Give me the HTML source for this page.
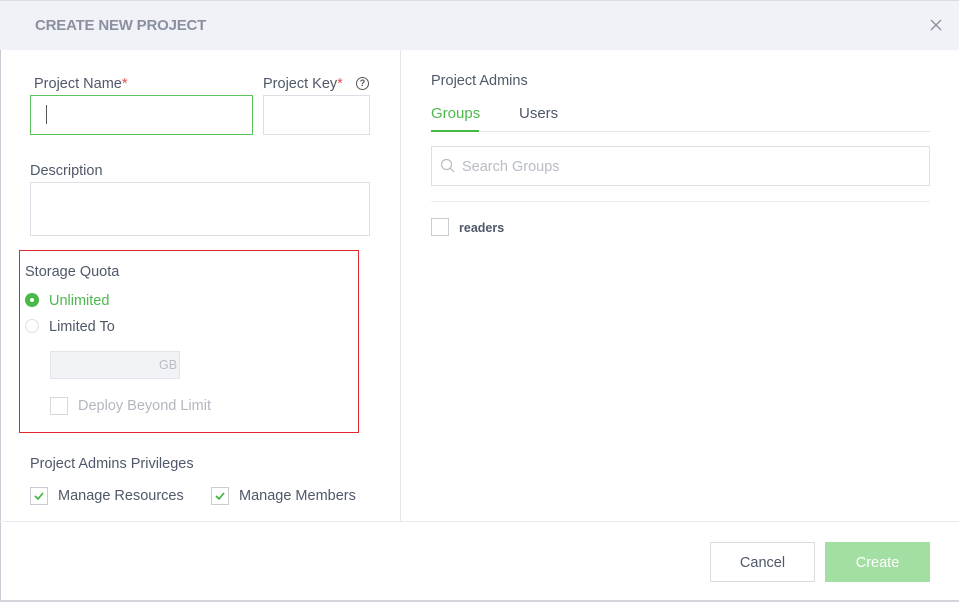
<!DOCTYPE html>
<html><head><meta charset="utf-8"><style>
*{box-sizing:border-box;margin:0;padding:0}
body{width:959px;height:602px;position:relative;background:#fff;font-family:"Liberation Sans",sans-serif;color:#4a5364;overflow:hidden}
.a{position:absolute}
.t{margin-top:2px}
.lbl{font-size:14.5px;color:#4f5869}
.box{position:absolute;border:1px solid #dcdfe6;background:#fff}
.star{color:#e94e4e}
.chk{position:absolute;width:18px;height:18px;border:1px solid #c9ccd3;background:#fff}
</style></head><body>
<div class="a" style="left:0;top:0;width:959px;height:50px;background:#f0f2f7;border-top:1px solid #d9dce3"></div>
<div class="a" style="left:35px;top:17px;font-size:15px;font-weight:bold;color:#8a90a0;letter-spacing:-0.2px">CREATE NEW PROJECT</div>
<svg class="a" style="left:930px;top:19px" width="12" height="12"><path d="M1 1L11 11M11 1L1 11" stroke="#8a8f99" stroke-width="1.3"/></svg>
<div class="a" style="left:0;top:50px;width:1px;height:552px;background:#c8cbd1"></div>
<div class="a" style="left:0;top:600px;width:959px;height:2px;background:#d2d5da"></div>
<div class="a" style="left:400px;top:50px;width:1px;height:471px;background:#e4e6eb"></div>
<div class="a" style="left:0;top:521px;width:959px;height:1px;background:#e8eaee"></div>

<div class="a lbl t" style="left:34px;top:74px">Project Name<span class="star">*</span></div>
<div class="box" style="left:30px;top:95px;width:223px;height:40px;border-color:#5cc35c"></div>
<div class="a" style="left:46px;top:105px;width:1px;height:19px;background:#555"></div>
<div class="a lbl t" style="left:263px;top:74px">Project Key<span class="star">*</span></div>
<div class="a" style="left:356px;top:77px;width:13px;height:13px;border:1.3px solid #555;border-radius:50%;font-size:9px;line-height:11px;text-align:center;color:#555;font-weight:bold">?</div>
<div class="box" style="left:263px;top:95px;width:107px;height:40px"></div>
<div class="a lbl t" style="left:30px;top:161px">Description</div>
<div class="box" style="left:30px;top:182px;width:340px;height:54px"></div>

<div class="a" style="left:19px;top:250px;width:340px;height:183px;border:1px solid #e0262e"></div>
<div class="a lbl t" style="left:25px;top:262px">Storage Quota</div>
<div class="a" style="left:25px;top:293px;width:14px;height:14px;border-radius:50%;background:#48b848"></div>
<div class="a" style="left:30px;top:298px;width:4px;height:4px;border-radius:50%;background:#fff"></div>
<div class="a t" style="left:49px;top:291px;font-size:14.5px;color:#4cb84c">Unlimited</div>
<div class="a" style="left:25px;top:319px;width:14px;height:14px;border-radius:50%;border:1px solid #dcdfe4"></div>
<div class="a lbl t" style="left:49px;top:317px">Limited To</div>
<div class="a" style="left:50px;top:351px;width:130px;height:28px;background:#f2f3f6;border:1px solid #e2e4e9"></div>
<div class="a t" style="left:159px;top:356px;font-size:12.5px;color:#b8bcc4">GB</div>
<div class="chk" style="left:50px;top:397px;border-color:#d5d8dd"></div>
<div class="a t" style="left:78px;top:396px;font-size:14.5px;color:#b3b7bf">Deploy Beyond Limit</div>

<div class="a lbl t" style="left:30px;top:454px">Project Admins Privileges</div>
<div class="chk" style="left:30px;top:487px"></div>
<svg class="a" style="left:34px;top:492px" width="10" height="8"><path d="M1 4L4 7L9 1" stroke="#3cb43c" stroke-width="1.6" fill="none"/></svg>
<div class="a lbl t" style="left:58px;top:486px">Manage Resources</div>
<div class="chk" style="left:211px;top:487px"></div>
<svg class="a" style="left:215px;top:492px" width="10" height="8"><path d="M1 4L4 7L9 1" stroke="#3cb43c" stroke-width="1.6" fill="none"/></svg>
<div class="a lbl t" style="left:239px;top:486px">Manage Members</div>

<div class="a t" style="left:431px;top:71px;font-size:14.5px;color:#4f5869">Project Admins</div>
<div class="a t" style="left:431px;top:103px;font-size:15px;color:#4cb84c">Groups</div>
<div class="a t" style="left:519px;top:103px;font-size:15px;color:#4f5869">Users</div>
<div class="a" style="left:431px;top:131px;width:499px;height:1px;background:#e2e4e9"></div>
<div class="a" style="left:431px;top:130px;width:48px;height:2px;background:#48b848"></div>
<div class="box" style="left:431px;top:146px;width:499px;height:40px"></div>
<svg class="a" style="left:440px;top:158px" width="16" height="16"><circle cx="6.5" cy="6.5" r="5" stroke="#b8bcc4" stroke-width="1.2" fill="none"/><path d="M10.2 10.2L14 14" stroke="#b8bcc4" stroke-width="1.2"/></svg>
<div class="a t" style="left:462px;top:157px;font-size:14.5px;color:#b8bcc4">Search Groups</div>
<div class="a" style="left:431px;top:201px;width:499px;height:1px;background:#eceef1"></div>
<div class="chk" style="left:431px;top:218px"></div>
<div class="a t" style="left:459px;top:219px;font-size:12.5px;color:#4f5869;font-weight:bold">readers</div>

<div class="a" style="left:710px;top:542px;width:105px;height:40px;border:1px solid #d8dbe0;text-align:center;line-height:40px;font-size:14.5px;color:#4f5869">Cancel</div>
<div class="a" style="left:825px;top:542px;width:105px;height:40px;background:#a3dea3;text-align:center;line-height:42px;font-size:14.5px;color:#fff">Create</div>
</body></html>
